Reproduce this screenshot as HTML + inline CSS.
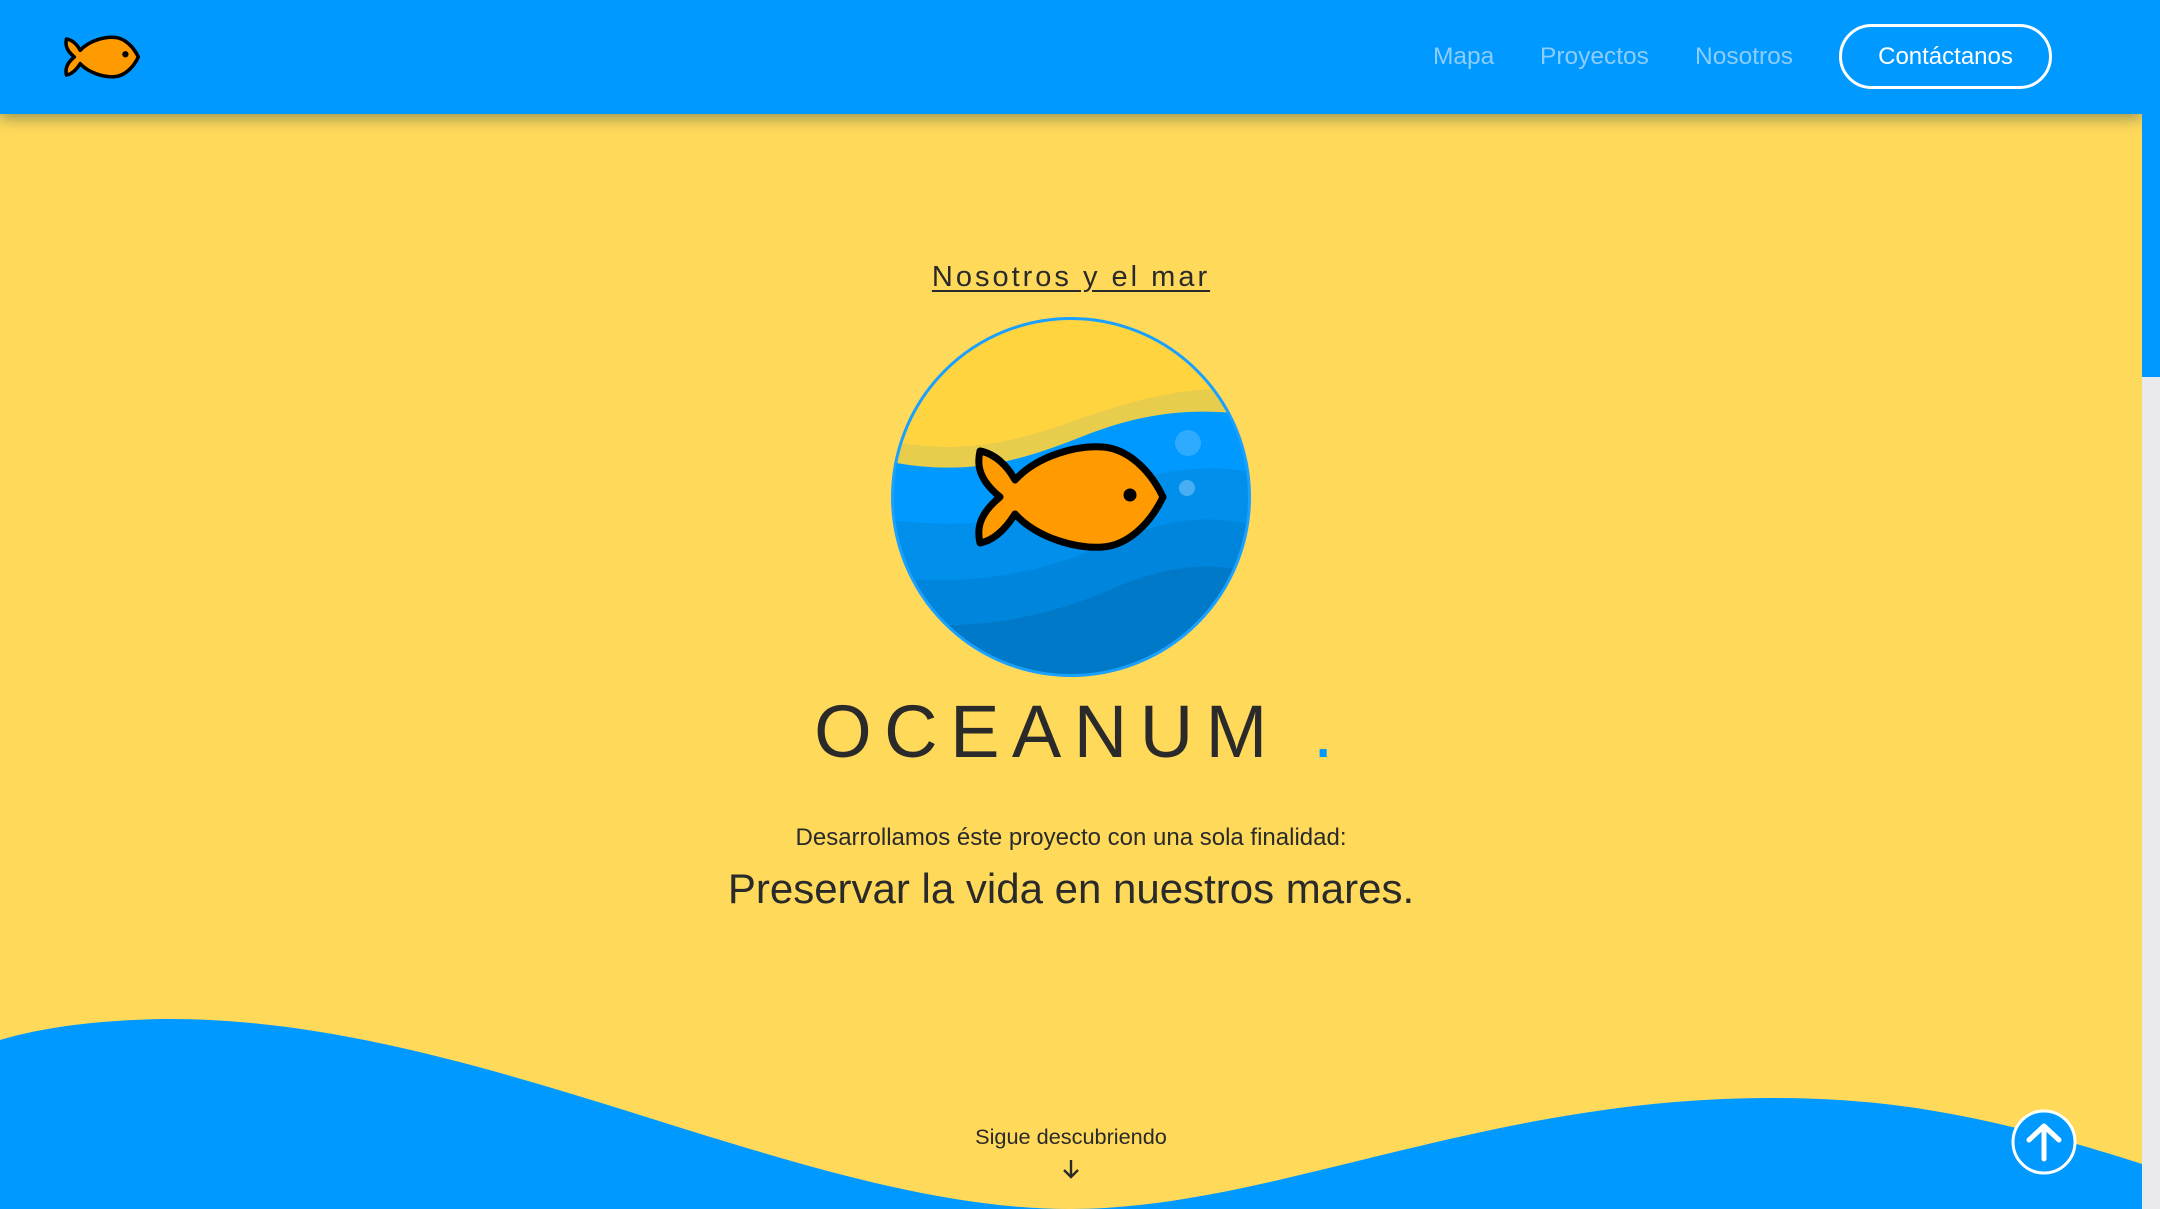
<!DOCTYPE html>
<html><head><meta charset="utf-8"><style>
*{margin:0;padding:0;box-sizing:border-box}
html,body{width:2160px;height:1209px;overflow:hidden;background:#FFD95A;font-family:"Liberation Sans",Arial,sans-serif;color:#2a2a2a}
.page{position:absolute;left:0;top:0;width:2142px;height:1209px;background:#FFD95A;overflow:hidden}
.wave{position:absolute;left:0;top:0}
header{position:absolute;left:0;top:0;width:2142px;height:114px;background:#0099FF;box-shadow:0 4px 14px rgba(60,90,80,.55);z-index:5}
.nav{position:absolute;top:43px;font-size:24.5px;color:#8ccdfc;line-height:28px}
.btn{position:absolute;left:1839px;top:24px;width:213px;height:65px;border:3px solid #fff;border-radius:33px;color:#fff;font-size:24px;text-align:center;line-height:59px}
.t{position:absolute;left:0;width:2142px;text-align:center;white-space:nowrap}
.scroll{position:absolute;left:2142px;top:0;width:18px;height:1209px;background:#e9e9ee}
.thumb{position:absolute;left:2142px;top:0;width:18px;height:377px;background:#0099FF}
</style></head><body>
<div class="page">
<svg class="wave" width="2142" height="1209" viewBox="0 0 2142 1209">
<rect width="2142" height="1209" fill="#0099FF"/>
<path d="M0,0 L2142,0 L2142,1164 C1980,1112 1880,1097 1763,1098 C1480,1100 1270,1209 1070,1209 C800,1209 480,1017 165,1019 C95,1020 40,1028 0,1040 Z" fill="#FFD95A"/>
</svg>
<header>
<svg style="position:absolute;left:64px;top:35px" width="78" height="44" viewBox="-4 -4 198 112">
<path d="M37,35 C60,10 100,0 125,2 C150,4 172,25 185,52 C172,79 150,100 125,102 C100,104 60,94 37,69 C30,80 18,95 2,98 C-1,85 0,70 22,52 C0,34 -1,19 2,6 C18,9 30,22 37,35 Z" fill="#FF9A00" stroke="#000" stroke-width="9" stroke-linejoin="round"/>
<circle cx="152" cy="45" r="8" fill="#000"/>
</svg>
<div class="nav" style="left:1433px">Mapa</div>
<div class="nav" style="left:1540px">Proyectos</div>
<div class="nav" style="left:1695px">Nosotros</div>
<div class="btn">Contáctanos</div>
</header>
<div class="t" style="top:261px;font-size:29px;letter-spacing:3px;"><span style="text-decoration:underline;text-underline-offset:4px">Nosotros y el mar</span></div>
<svg style="position:absolute;left:891px;top:317px" width="360" height="360" viewBox="0 0 360 360">
<defs><clipPath id="c"><circle cx="180" cy="180" r="178"/></clipPath></defs>
<g clip-path="url(#c)">
<rect width="360" height="360" fill="#FFD43F"/>
<path d="M0,124 C60,136 110,130 180,105 C250,80 300,68 360,73 L360,360 L0,360Z" fill="#E8CD4C"/>
<path d="M0,145 C70,158 120,148 190,120 C250,96 300,90 360,98 L360,360 L0,360Z" fill="#0099FF"/>
<path d="M0,203 C80,212 150,205 220,170 C280,150 320,148 360,155 L360,360 L0,360Z" fill="#0090EC"/>
<path d="M0,261 C80,268 150,258 220,225 C280,200 320,198 360,208 L360,360 L0,360Z" fill="#0085DC"/>
<path d="M40,308 C110,310 170,295 230,268 C280,248 320,245 360,255 L360,360 L40,360Z" fill="#0079C9"/>
<circle cx="297" cy="126" r="13" fill="rgba(255,255,255,.18)"/>
<circle cx="296" cy="171" r="8" fill="rgba(255,255,255,.28)"/>
<g transform="translate(87,128)">
<path d="M37,35 C60,10 100,0 125,2 C150,4 172,25 185,52 C172,79 150,100 125,102 C100,104 60,94 37,69 C30,80 18,95 2,98 C-1,85 0,70 22,52 C0,34 -1,19 2,6 C18,9 30,22 37,35 Z" fill="#FF9A00" stroke="#000" stroke-width="7" stroke-linejoin="round"/>
<circle cx="152" cy="50" r="6.5" fill="#000"/>
</g>
</g>
<circle cx="180" cy="180" r="178.5" fill="none" stroke="#1aa0ff" stroke-width="3"/>
</svg>
<div class="t" style="top:690px;font-size:74px;letter-spacing:12.5px;line-height:84px;padding-left:18px">OCEANUM <span style="color:#0099FF">.</span></div>
<div class="t" style="top:824px;font-size:24px">Desarrollamos éste proyecto con una sola finalidad:</div>
<div class="t" style="top:865px;font-size:42px">Preservar la vida en nuestros mares.</div>
<div class="t" style="top:1124px;font-size:21.7px">Sigue descubriendo</div>
<svg style="position:absolute;left:1061px;top:1158px" width="20" height="22" viewBox="0 0 20 22"><path d="M10,2 V19 M3,12 L10,19 L17,12" fill="none" stroke="#2a2a2a" stroke-width="2.4"/></svg>
<svg style="position:absolute;left:2011px;top:1109px" width="66" height="66" viewBox="0 0 66 66">
<circle cx="33" cy="33" r="31" fill="#0099FF" stroke="#fff" stroke-width="3"/>
<path d="M33,50 V17 M18,31 L33,17 L48,31" fill="none" stroke="#fff" stroke-width="5" stroke-linecap="round" stroke-linejoin="round"/>
</svg>
</div>
<div class="scroll"></div><div class="thumb"></div>
</body></html>
